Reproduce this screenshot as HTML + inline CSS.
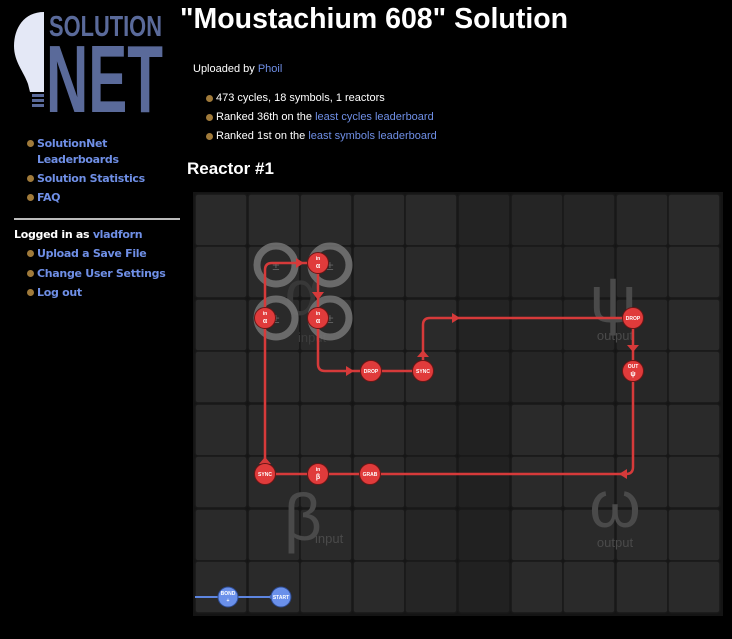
<!DOCTYPE html>
<html><head><meta charset="utf-8"><style>
*{margin:0;padding:0}
body{width:732px;height:639px;background:#000;color:#fff;font-family:"Liberation Sans",sans-serif;position:relative;overflow:hidden}
.a{position:absolute;white-space:nowrap}
.nav{color:#6f8fe6;font-family:"DejaVu Sans",sans-serif;font-weight:bold;font-size:11px;letter-spacing:-0.3px}
.b{display:inline-block;width:7px;height:7px;border-radius:50%;background:#a07a3a;position:absolute;left:-10px;top:3px}
.t{font-size:11px}
.l{color:#6f8fe6}
</style></head><body>
<svg class="a" style="left:0;top:0" width="170" height="120">
<path d="M44 12 C24 12 14 28 14 46 C14 62 24 72 28 84 L30 92 L44 92 Z" fill="#e4e8f6"/>
<rect x="32" y="94" width="12" height="3" fill="#5a6a9a"/>
<rect x="32" y="99" width="12" height="3" fill="#5a6a9a"/>
<rect x="32" y="104" width="12" height="3" fill="#5a6a9a"/>
<text x="49" y="36" font-family="Liberation Sans" font-weight="bold" font-size="29" fill="#5a6a9a" textLength="113" lengthAdjust="spacingAndGlyphs">SOLUTION</text>
<text x="46" y="112" font-family="Liberation Sans" font-weight="bold" font-size="96" fill="#5a6a9a" textLength="117" lengthAdjust="spacingAndGlyphs">NET</text>
</svg>
<div class="a nav" style="left:37px;top:137px"><span class="b"></span>SolutionNet</div>
<div class="a nav" style="left:37px;top:153px">Leaderboards</div>
<div class="a nav" style="left:37px;top:172px"><span class="b"></span>Solution Statistics</div>
<div class="a nav" style="left:37px;top:191px"><span class="b"></span>FAQ</div>
<div class="a" style="left:14px;top:218px;width:166px;height:2px;background:#bbb"></div>
<div class="a nav" style="left:14px;top:228px;color:#fff">Logged in as <span style="color:#6f8fe6">vladforn</span></div>
<div class="a nav" style="left:37px;top:247px"><span class="b"></span>Upload a Save File</div>
<div class="a nav" style="left:37px;top:267px"><span class="b"></span>Change User Settings</div>
<div class="a nav" style="left:37px;top:286px"><span class="b"></span>Log out</div>

<div class="a" style="left:180px;top:3px;font-size:28.5px;font-weight:bold">"Moustachium 608" Solution</div>
<div class="a t" style="left:193px;top:63px">Uploaded by <span class="l">Phoil</span></div>
<div class="a t" style="left:216px;top:92px"><span class="b"></span>473 cycles, 18 symbols, 1 reactors</div>
<div class="a t" style="left:216px;top:111px"><span class="b"></span>Ranked 36th on the <span class="l">least cycles leaderboard</span></div>
<div class="a t" style="left:216px;top:130px"><span class="b"></span>Ranked 1st on the <span class="l">least symbols leaderboard</span></div>
<div class="a" style="left:187px;top:159px;font-size:17px;font-weight:bold">Reactor #1</div>

<svg class="a" style="left:0;top:0" width="732" height="639" font-family="Liberation Sans">
<rect x="193" y="192" width="530" height="424" fill="#141414"/>
<g fill="#2a2a2a" stroke="#181818" stroke-width="1.5">
<rect x="195" y="194" width="52" height="52" rx="3"/><rect x="248" y="194" width="52" height="52" rx="3"/><rect x="300" y="194" width="52" height="52" rx="3"/><rect x="353" y="194" width="52" height="52" rx="3"/><rect x="405" y="194" width="52" height="52" rx="3"/><rect x="458" y="194" width="52" height="52" rx="3" fill="#232323"/><rect x="511" y="194" width="52" height="52" rx="3" fill="#252525"/><rect x="563" y="194" width="52" height="52" rx="3" fill="#252525"/><rect x="616" y="194" width="52" height="52" rx="3" fill="#272727"/><rect x="668" y="194" width="52" height="52" rx="3"/>
<rect x="195" y="246" width="52" height="52" rx="3"/><rect x="248" y="246" width="52" height="52" rx="3"/><rect x="300" y="246" width="52" height="52" rx="3"/><rect x="353" y="246" width="52" height="52" rx="3"/><rect x="405" y="246" width="52" height="52" rx="3"/><rect x="458" y="246" width="52" height="52" rx="3" fill="#232323"/><rect x="511" y="246" width="52" height="52" rx="3" fill="#252525"/><rect x="563" y="246" width="52" height="52" rx="3" fill="#252525"/><rect x="616" y="246" width="52" height="52" rx="3" fill="#272727"/><rect x="668" y="246" width="52" height="52" rx="3"/>
<rect x="195" y="299" width="52" height="52" rx="3"/><rect x="248" y="299" width="52" height="52" rx="3"/><rect x="300" y="299" width="52" height="52" rx="3"/><rect x="353" y="299" width="52" height="52" rx="3"/><rect x="405" y="299" width="52" height="52" rx="3"/><rect x="458" y="299" width="52" height="52" rx="3" fill="#232323"/><rect x="511" y="299" width="52" height="52" rx="3" fill="#252525"/><rect x="563" y="299" width="52" height="52" rx="3" fill="#252525"/><rect x="616" y="299" width="52" height="52" rx="3" fill="#272727"/><rect x="668" y="299" width="52" height="52" rx="3"/>
<rect x="195" y="351" width="52" height="52" rx="3"/><rect x="248" y="351" width="52" height="52" rx="3"/><rect x="300" y="351" width="52" height="52" rx="3"/><rect x="353" y="351" width="52" height="52" rx="3"/><rect x="405" y="351" width="52" height="52" rx="3"/><rect x="458" y="351" width="52" height="52" rx="3" fill="#232323"/><rect x="511" y="351" width="52" height="52" rx="3" fill="#252525"/><rect x="563" y="351" width="52" height="52" rx="3" fill="#252525"/><rect x="616" y="351" width="52" height="52" rx="3" fill="#272727"/><rect x="668" y="351" width="52" height="52" rx="3"/>
<rect x="195" y="404" width="52" height="52" rx="3"/><rect x="248" y="404" width="52" height="52" rx="3"/><rect x="300" y="404" width="52" height="52" rx="3"/><rect x="353" y="404" width="52" height="52" rx="3"/><rect x="405" y="404" width="52" height="52" rx="3" fill="#252525"/><rect x="458" y="404" width="52" height="52" rx="3" fill="#212121"/><rect x="511" y="404" width="52" height="52" rx="3"/><rect x="563" y="404" width="52" height="52" rx="3"/><rect x="616" y="404" width="52" height="52" rx="3"/><rect x="668" y="404" width="52" height="52" rx="3"/>
<rect x="195" y="456" width="52" height="52" rx="3"/><rect x="248" y="456" width="52" height="52" rx="3"/><rect x="300" y="456" width="52" height="52" rx="3"/><rect x="353" y="456" width="52" height="52" rx="3"/><rect x="405" y="456" width="52" height="52" rx="3" fill="#252525"/><rect x="458" y="456" width="52" height="52" rx="3" fill="#212121"/><rect x="511" y="456" width="52" height="52" rx="3"/><rect x="563" y="456" width="52" height="52" rx="3"/><rect x="616" y="456" width="52" height="52" rx="3"/><rect x="668" y="456" width="52" height="52" rx="3"/>
<rect x="195" y="509" width="52" height="52" rx="3"/><rect x="248" y="509" width="52" height="52" rx="3"/><rect x="300" y="509" width="52" height="52" rx="3"/><rect x="353" y="509" width="52" height="52" rx="3"/><rect x="405" y="509" width="52" height="52" rx="3" fill="#252525"/><rect x="458" y="509" width="52" height="52" rx="3" fill="#212121"/><rect x="511" y="509" width="52" height="52" rx="3"/><rect x="563" y="509" width="52" height="52" rx="3"/><rect x="616" y="509" width="52" height="52" rx="3"/><rect x="668" y="509" width="52" height="52" rx="3"/>
<rect x="195" y="561" width="52" height="52" rx="3"/><rect x="248" y="561" width="52" height="52" rx="3"/><rect x="300" y="561" width="52" height="52" rx="3"/><rect x="353" y="561" width="52" height="52" rx="3"/><rect x="405" y="561" width="52" height="52" rx="3" fill="#252525"/><rect x="458" y="561" width="52" height="52" rx="3" fill="#212121"/><rect x="511" y="561" width="52" height="52" rx="3"/><rect x="563" y="561" width="52" height="52" rx="3"/><rect x="616" y="561" width="52" height="52" rx="3"/><rect x="668" y="561" width="52" height="52" rx="3"/>
</g>
<g fill="#4a4a4a">
<text x="303" y="315" font-size="64" text-anchor="middle" fill="#383838">α</text>
<text x="298" y="342" font-size="13" fill="#3c3c3c">input</text>
<text x="613" y="322" font-size="66" text-anchor="middle">ψ</text>
<text x="615" y="340" font-size="13" text-anchor="middle">output</text>
<text x="303" y="540" font-size="66" text-anchor="middle">β</text>
<text x="315" y="543" font-size="13">input</text>
<text x="615" y="527" font-size="66" text-anchor="middle">ω</text>
<text x="615" y="547" font-size="13" text-anchor="middle">output</text>
</g>
<g fill="none" stroke="#7a7a7a" stroke-width="7" opacity="0.8">
<circle cx="276" cy="265" r="19"/><circle cx="330" cy="265" r="19"/><circle cx="276" cy="318" r="19"/><circle cx="330" cy="318" r="19"/>
</g>
<g fill="#666" font-size="13" text-anchor="middle"><text x="276" y="270">±</text><text x="330" y="270">±</text><text x="276" y="323">±</text><text x="330" y="323">±</text></g>
<g fill="none" stroke="#d63a3a" stroke-width="2.5">
<path d="M265 475 L265 270 Q265 263 272 263 L318 263 L318 364 Q318 371 325 371 L423 371 L423 325 Q423 318 430 318 L633 318 L633 467 Q633 474 626 474 L265 474"/>
</g>
<g fill="#d63a3a">
<path d="M296 258 L304 263 L296 268Z"/><path d="M312 292 L318 300 L324 292Z"/><path d="M346 366 L354 371 L346 376Z"/><path d="M417 357 L423 350 L429 357Z"/><path d="M452 313 L460 318 L452 323Z"/><path d="M627 345 L633 352 L639 345Z"/><path d="M627 469 L619 474 L627 479Z"/><path d="M259 464 L265 457 L271 464Z"/><path d="M364 469 L358 474 L364 479Z"/>
</g>
<g fill="#e03b3b" stroke="#6a1515" stroke-width="1">
<circle cx="318" cy="263" r="10.5"/><circle cx="265" cy="318" r="10.5"/><circle cx="318" cy="318" r="10.5"/><circle cx="371" cy="371" r="10.5"/><circle cx="423" cy="371" r="10.5"/><circle cx="633" cy="318" r="10.5"/><circle cx="633" cy="371" r="10.5"/><circle cx="265" cy="474" r="10.5"/><circle cx="318" cy="474" r="10.5"/><circle cx="370" cy="474" r="10.5"/>
</g>
<g fill="#fff" font-size="5" text-anchor="middle" font-weight="bold">
<text x="318" y="260">in</text><text x="318" y="268" font-size="7">α</text>
<text x="265" y="315">in</text><text x="265" y="323" font-size="7">α</text>
<text x="318" y="315">in</text><text x="318" y="323" font-size="7">α</text>
<text x="371" y="373">DROP</text><text x="423" y="373">SYNC</text><text x="633" y="320">DROP</text>
<text x="633" y="368">OUT</text><text x="633" y="376" font-size="7">ψ</text>
<text x="265" y="476">SYNC</text><text x="318" y="471">in</text><text x="318" y="479" font-size="7">β</text><text x="370" y="476">GRAB</text>
</g>
<path d="M195 597 L281 597" stroke="#5d85e0" stroke-width="2" fill="none"/>
<path d="M275 592 L268 597 L275 602Z" fill="#5d85e0"/>
<g fill="#6a90ea" stroke="#2c4a90"><circle cx="228" cy="597" r="10"/><circle cx="281" cy="597" r="10"/></g>
<g fill="#fff" font-size="5" text-anchor="middle" font-weight="bold"><text x="228" y="595">BOND</text><text x="228" y="602">+</text><text x="281" y="599">START</text></g>
</svg>
</body></html>
